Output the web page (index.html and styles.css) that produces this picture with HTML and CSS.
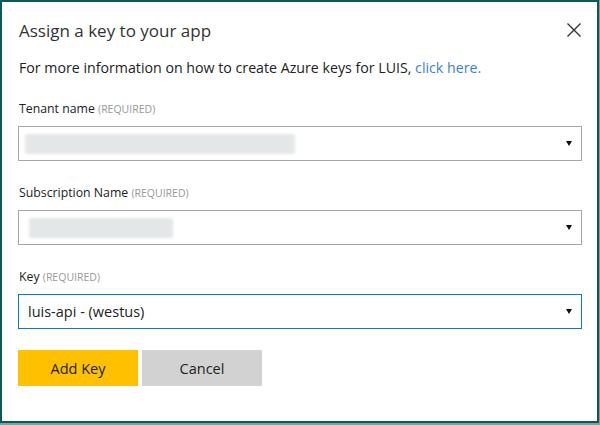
FILE: index.html
```html
<!DOCTYPE html>
<html>
<head>
<meta charset="utf-8">
<link rel="stylesheet" href="styles.css">
</head>
<body>
<div class="dialog">
  <div class="header">
    <h1 class="title">Assign a key to your app</h1>
    <button class="close" aria-label="Close">
      <svg width="16" height="16" viewBox="0 0 16 16"><path d="M1.5 1.5 L14.5 14.5 M14.5 1.5 L1.5 14.5" stroke="#333" stroke-width="1.4" fill="none"/></svg>
    </button>
  </div>
  <p class="info">For more information on how to create Azure keys for LUIS, <a href="#" class="link">click here.</a></p>

  <div class="field">
    <label class="label">Tenant name <span class="req">(REQUIRED)</span></label>
    <div class="select">
      <span class="blur blur-long"></span>
      <span class="arrow"></span>
    </div>
  </div>

  <div class="field">
    <label class="label">Subscription Name <span class="req">(REQUIRED)</span></label>
    <div class="select">
      <span class="blur blur-short"></span>
      <span class="arrow"></span>
    </div>
  </div>

  <div class="field">
    <label class="label">Key <span class="req">(REQUIRED)</span></label>
    <div class="select focused">
      <span class="value">luis-api - (westus)</span>
      <span class="arrow"></span>
    </div>
  </div>

  <div class="actions">
    <button class="btn primary">Add Key</button>
    <button class="btn secondary">Cancel</button>
  </div>
</div>
</body>
</html>
```

FILE: styles.css
```css
html, body {
  margin: 0;
  padding: 0;
}
body {
  width: 600px;
  height: 425px;
  background: #8f9a9a;
  font-family: "Open Sans", "Noto Sans", sans-serif;
  color: #222;
  overflow: hidden;
}
.dialog {
  box-sizing: border-box;
  width: 599px;
  height: 423px;
  background: #fff;
  border: 2px solid #0b5a5a;
  padding: 0 15px 0 16px;
}
.header {
  display: flex;
  justify-content: space-between;
  align-items: center;
  height: 56px;
}
.title {
  margin: 0;
  font-weight: 400;
  font-size: 17px;
  color: #333;
  padding-left: 1px;
}
.close {
  border: 0;
  background: none;
  padding: 0;
  margin-right: 0;
  width: 16px;
  height: 16px;
  display: flex;
}
.info {
  margin: 0 0 0 1px;
  font-size: 14.2px;
  line-height: 20px;
  color: #222;
}
.link {
  color: #3b7fd1;
  text-decoration: none;
}
.field {
  margin-top: 22px;
}
.field + .field {
  margin-top: 23px;
}
.label {
  display: block;
  font-size: 12.3px;
  line-height: 18px;
  margin: 0 0 8px 1px;
  color: #222;
}
.req {
  font-size: 10.5px;
  color: #999;
}
.select {
  box-sizing: border-box;
  height: 35px;
  border: 1px solid #a6a6a6;
  display: flex;
  align-items: center;
  justify-content: space-between;
  padding: 0 7px 0 6px;
}
.select.focused {
  border-color: #0a78d4;
}
.blur {
  display: block;
  height: 20px;
  background: #e4e7e8;
  filter: blur(1.5px);
}
.blur-long { width: 270px; }
.blur-short { width: 144px; margin-left: 4px; }
.value {
  font-size: 14.5px;
  color: #222;
  padding-left: 3px;
}
.arrow {
  width: 0;
  height: 0;
  border-left: 3.5px solid transparent;
  border-right: 3.5px solid transparent;
  border-top: 5px solid #111;
  margin-right: 2px;
}
.actions {
  display: flex;
  gap: 4px;
  margin-top: 21px;
}
.btn {
  width: 120px;
  height: 36px;
  border: 0;
  font-family: inherit;
  font-size: 14.5px;
  color: #222;
  padding: 0;
}
.primary { background: #ffc000; }
.secondary { background: #d2d2d2; }
```
